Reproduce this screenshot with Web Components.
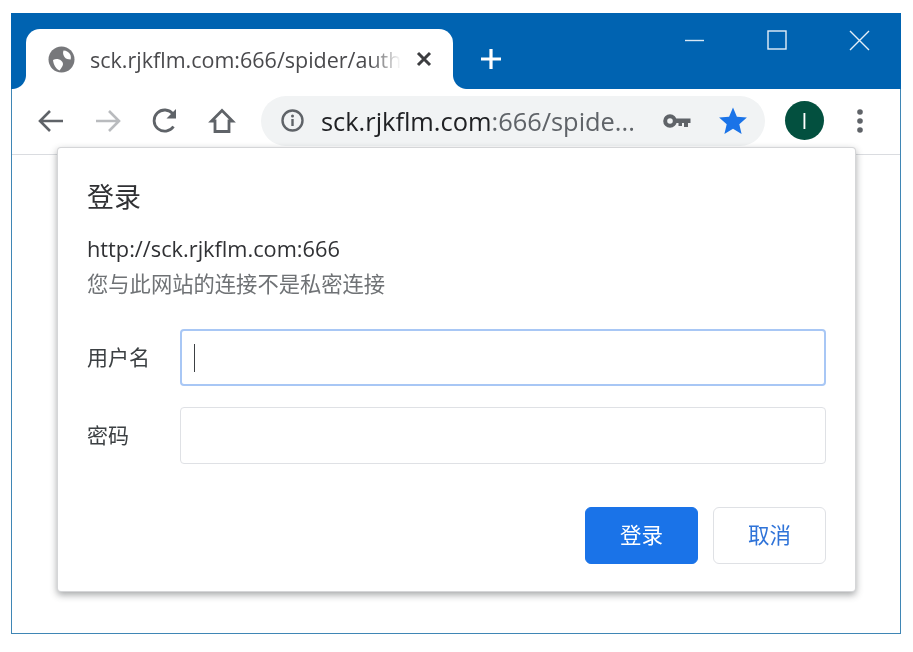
<!DOCTYPE html>
<html lang="zh">
<head>
<meta charset="utf-8">
<title>登录</title>
<style>
  html, body { margin: 0; background: #fff; }
  body { padding: 13px 0 0 11px; font-family: "Open Sans", "Noto Sans CJK SC", sans-serif; }
</style>
</head>
<body>
<browser-window>
  <login-dialog slot="dialog"></login-dialog>
</browser-window>

<script>
(function(customElements) {
  'use strict';

  class browserTab extends HTMLElement {
    constructor() {
      super();
      const shadowRoot = this.attachShadow({mode: 'open'});
      shadowRoot.innerHTML = `
      <style>
        :host { display: flex; align-items: center; box-sizing: border-box; position: relative;
          width: 427px; height: 60px; margin-left: 15px; padding: 0 0 0 22px; background: #fff;
          border-radius: 14px 14px 0 0; }
        :host::before, :host::after { content: ''; position: absolute; bottom: 0; width: 14px; height: 14px; }
        :host::before { left: -14px; background: radial-gradient(circle at 0 0, #0063b1 13.5px, #fff 14.5px); }
        :host::after { right: -14px; background: radial-gradient(circle at 100% 0, #0063b1 13.5px, #fff 14.5px); }
        .globe { width: 27px; height: 27px; flex: none; }
        .title { width: 311px; margin-left: 15px; flex: none; overflow: hidden; white-space: nowrap;
          font-size: 21.5px; color: #4a4a4d;
          -webkit-mask-image: linear-gradient(to right, #000 90%, transparent 100%);
          mask-image: linear-gradient(to right, #000 90%, transparent 100%); }
        .close { width: 18px; height: 18px; margin-left: 14px; flex: none; }
      </style>
      <svg class="globe" viewBox="0 0 27 27">
        <circle cx="13.5" cy="13.5" r="13" fill="#77787b"/>
        <path d="M5 14c3-1.500 6-1 8 .5s2.500 3.500 1.500 5.500-2 3-3 4.500C8 23 5.500 19 5 14zM15.500 4.500c3 0 5.500 1.500 7 4.500.5 1.500.5 3 .2 4.500-2.700 0-5-.7-6.200-2.500s-2-4-1-6.500z" fill="#fff"/>
      </svg>
      <span class="title">sck.rjkflm.com:666/spider/auth</span>
      <svg class="close" viewBox="0 0 18 18"><path d="M3 3l12 12M15 3L3 15" stroke="#3c3d40" stroke-width="3" fill="none"/></svg>
      `;
    }
  }
  customElements.define('browser-tab', browserTab);

  class windowControls extends HTMLElement {
    constructor() {
      super();
      const shadowRoot = this.attachShadow({mode: 'open'});
      shadowRoot.innerHTML = `
      <style>
        :host { display: flex; margin-left: auto; padding: 16px 31px 0 0; gap: 60px; align-self: flex-start; }
        svg { width: 22px; height: 22px; display: block; }
        svg:first-child { margin-right: -3px; }
      </style>
      <svg viewBox="0 0 22 22"><path d="M1 11.500h19" stroke="#d9e8f5" stroke-width="1.400"/></svg>
      <svg viewBox="0 0 22 22"><rect x="2" y="2" width="18" height="18" fill="none" stroke="#e4eff8" stroke-width="1.400"/></svg>
      <svg viewBox="0 0 22 22"><path d="M2 2l19 19M21 2L2 21" stroke="#e4eff8" stroke-width="1.400" fill="none"/></svg>
      `;
    }
  }
  customElements.define('window-controls', windowControls);

  class browserToolbar extends HTMLElement {
    constructor() {
      super();
      const shadowRoot = this.attachShadow({mode: 'open'});
      shadowRoot.innerHTML = `
      <style>
        :host { display: flex; align-items: center; box-sizing: border-box; height: 66px; padding: 0 0 2px 24px;
          background: #fff; border-bottom: 1px solid #dadce0; }
        .nav { width: 30px; height: 30px; flex: none; display: block; }
        .nav + .nav { margin-left: 27px; }
        .omnibox { display: flex; align-items: center; box-sizing: border-box; width: 504px; height: 50px; margin-left: 24px;
          padding: 0 19px 0 19px; border-radius: 25px; background: #f1f3f4; flex: none; }
        .info { width: 25px; height: 25px; flex: none; }
        .url { margin-left: 16px; width: 320px; flex: none; font-size: 25.4px; white-space: nowrap; color: #202124; overflow: hidden; }
        .url span { color: #5f6368; }
        .key { width: 28px; height: 16px; margin-left: 22px; flex: none; }
        .star { width: 30px; height: 30px; margin-left: 27px; flex: none; }
        .avatar { display: flex; align-items: center; justify-content: center; width: 39px; height: 39px; margin-left: 20px;
          border-radius: 50%; background: #03503f; color: #fff; font-size: 21px; flex: none; }
        .menu { width: 8px; height: 26px; margin-left: 32px; flex: none; }
      </style>
      <svg class="nav" viewBox="0 0 30 30"><path d="M27 15H4M14 5L4 15l10 10" stroke="#5f6368" stroke-width="2.600" fill="none"/></svg>
      <svg class="nav" viewBox="0 0 30 30"><path d="M3 15h23M16 5l10 10-10 10" stroke="#b9bbbe" stroke-width="2.600" fill="none"/></svg>
      <svg class="nav" viewBox="0 0 30 30"><path d="M23.500 20.500A10.600 10.600 0 1 1 23 8" stroke="#5f6368" stroke-width="2.800" fill="none"/><path d="M26 3v9.500h-9.500z" fill="#5f6368"/></svg>
      <svg class="nav" viewBox="0 0 30 30"><path d="M15 4.500L4.500 15H8v10.500h14V15h3.500z" stroke="#5f6368" stroke-width="2.800" stroke-linejoin="miter" fill="none"/></svg>
      <div class="omnibox">
        <svg class="info" viewBox="0 0 25 25"><circle cx="12.500" cy="12.500" r="10" fill="none" stroke="#5f6368" stroke-width="2.400"/><path d="M12.500 11v7" stroke="#5f6368" stroke-width="2.400"/><circle cx="12.500" cy="8" r="1.500" fill="#5f6368"/></svg>
        <div class="url">sck.rjkflm.com<span>:666/spide...</span></div>
        <svg class="key" viewBox="0 0 28 16"><circle cx="7" cy="8" r="4.800" fill="none" stroke="#5f6368" stroke-width="4"/><path d="M11 5.500h16.500v4.500h-2.500v4h-4v-4h-2v3h-3.500v-3H11z" fill="#5f6368"/></svg>
        <svg class="star" viewBox="0 0 30 30"><path d="M15 1.500l3.900 9.300 10 .8-7.600 6.600 2.300 9.800L15 22.800 6.400 28l2.300-9.800L1.100 11.600l10-.8z" fill="#1a73e8"/></svg>
      </div>
      <div class="avatar">I</div>
      <svg class="menu" viewBox="0 0 8 26"><circle cx="4" cy="4" r="2.800" fill="#5f6368"/><circle cx="4" cy="13" r="2.800" fill="#5f6368"/><circle cx="4" cy="22" r="2.800" fill="#5f6368"/></svg>
      `;
    }
  }
  customElements.define('browser-toolbar', browserToolbar);

  class browserWindow extends HTMLElement {
    constructor() {
      super();
      const shadowRoot = this.attachShadow({mode: 'open'});
      shadowRoot.innerHTML = `
      <style>
        :host { display: block; box-sizing: border-box; position: relative; width: 890px; height: 621px;
          border: 1px solid #3f86b5; border-top: 0; background: #fff; filter: blur(.4px); }
        .titlebar { display: flex; align-items: flex-end; height: 76px; margin: 0 -1px; background: #0063b1; }
        .plus { width: 24px; height: 24px; margin: 0 0 18px 26px; flex: none; }
        ::slotted([slot=dialog]) { position: absolute; left: 46px; top: 135px; }
      </style>
      <div class="titlebar">
        <browser-tab></browser-tab>
        <svg class="plus" viewBox="0 0 24 24"><path d="M12 2v20M2 12h20" stroke="#fff" stroke-width="3.200"/></svg>
        <window-controls></window-controls>
      </div>
      <browser-toolbar></browser-toolbar>
      <slot name="dialog"></slot>
      `;
    }
  }
  customElements.define('browser-window', browserWindow);

  class formRow extends HTMLElement {
    constructor() {
      super();
      const shadowRoot = this.attachShadow({mode: 'open'});
      shadowRoot.innerHTML = `
      <style>
        :host { display: flex; align-items: center; height: 57px; }
        label { width: 93px; flex: none; padding-bottom: 4px; font-size: 21px; color: #3c4043; }
        .field { display: flex; align-items: center; box-sizing: border-box; flex: 1; height: 57px; padding-left: 12px;
          border: 1px solid #dfe1e5; border-radius: 4px; background: #fff; }
        :host([focused]) .field { border: 2px solid #a8c7f5; padding-left: 12px; }
        .caret { display: none; width: 1px; height: 28px; background: #3c4043; }
        :host([focused]) .caret { display: block; }
      </style>
      <label><slot></slot></label>
      <div class="field"><div class="caret"></div></div>
      `;
    }
  }
  customElements.define('form-row', formRow);

  class dialogButton extends HTMLElement {
    constructor() {
      super();
      const shadowRoot = this.attachShadow({mode: 'open'});
      shadowRoot.innerHTML = `
      <style>
        :host { display: flex; align-items: center; justify-content: center; box-sizing: border-box;
          width: 113px; height: 57px; padding-bottom: 4px; border-radius: 6px; font-size: 21.5px;
          border: 1px solid #dfe1e5; background: #fff; color: #2f73d8; }
        :host([primary]) { background: #1a73e8; border-color: #1a73e8; color: #fff; }
      </style>
      <slot></slot>
      `;
    }
  }
  customElements.define('dialog-button', dialogButton);

  class loginDialog extends HTMLElement {
    constructor() {
      super();
      const shadowRoot = this.attachShadow({mode: 'open'});
      shadowRoot.innerHTML = `
      <style>
        :host { display: block; box-sizing: border-box; width: 797px; height: 443px; padding: 29px 29px 0 29px;
          background: #fff; border-radius: 3px; font-family: "Open Sans", "Noto Sans CJK SC", sans-serif;
          box-shadow: 0 0 0 1px #d5d6d8, 0 3px 7px 1px rgba(60,64,67,.45); }
        h2 { margin: 0; font-weight: 400; font-size: 27px; line-height: 40px; color: #303134; }
        .origin { margin-top: 17px; font-size: 21.75px; line-height: 30px; color: #303134; }
        .note { margin-top: 6px; font-size: 21.3px; line-height: 28px; color: #6f7275; }
        .rows { display: flex; flex-direction: column; gap: 21px; margin-top: 31px; }
        .buttons { display: flex; justify-content: flex-end; gap: 15px; margin-top: 43px; }
      </style>
      <h2>登录</h2>
      <div class="origin">http://sck.rjkflm.com:666</div>
      <div class="note">您与此网站的连接不是私密连接</div>
      <div class="rows">
        <form-row focused>用户名</form-row>
        <form-row>密码</form-row>
      </div>
      <div class="buttons">
        <dialog-button primary>登录</dialog-button>
        <dialog-button>取消</dialog-button>
      </div>
      `;
    }
  }
  customElements.define('login-dialog', loginDialog);
})(window.customElements);
</script>
</body>
</html>
